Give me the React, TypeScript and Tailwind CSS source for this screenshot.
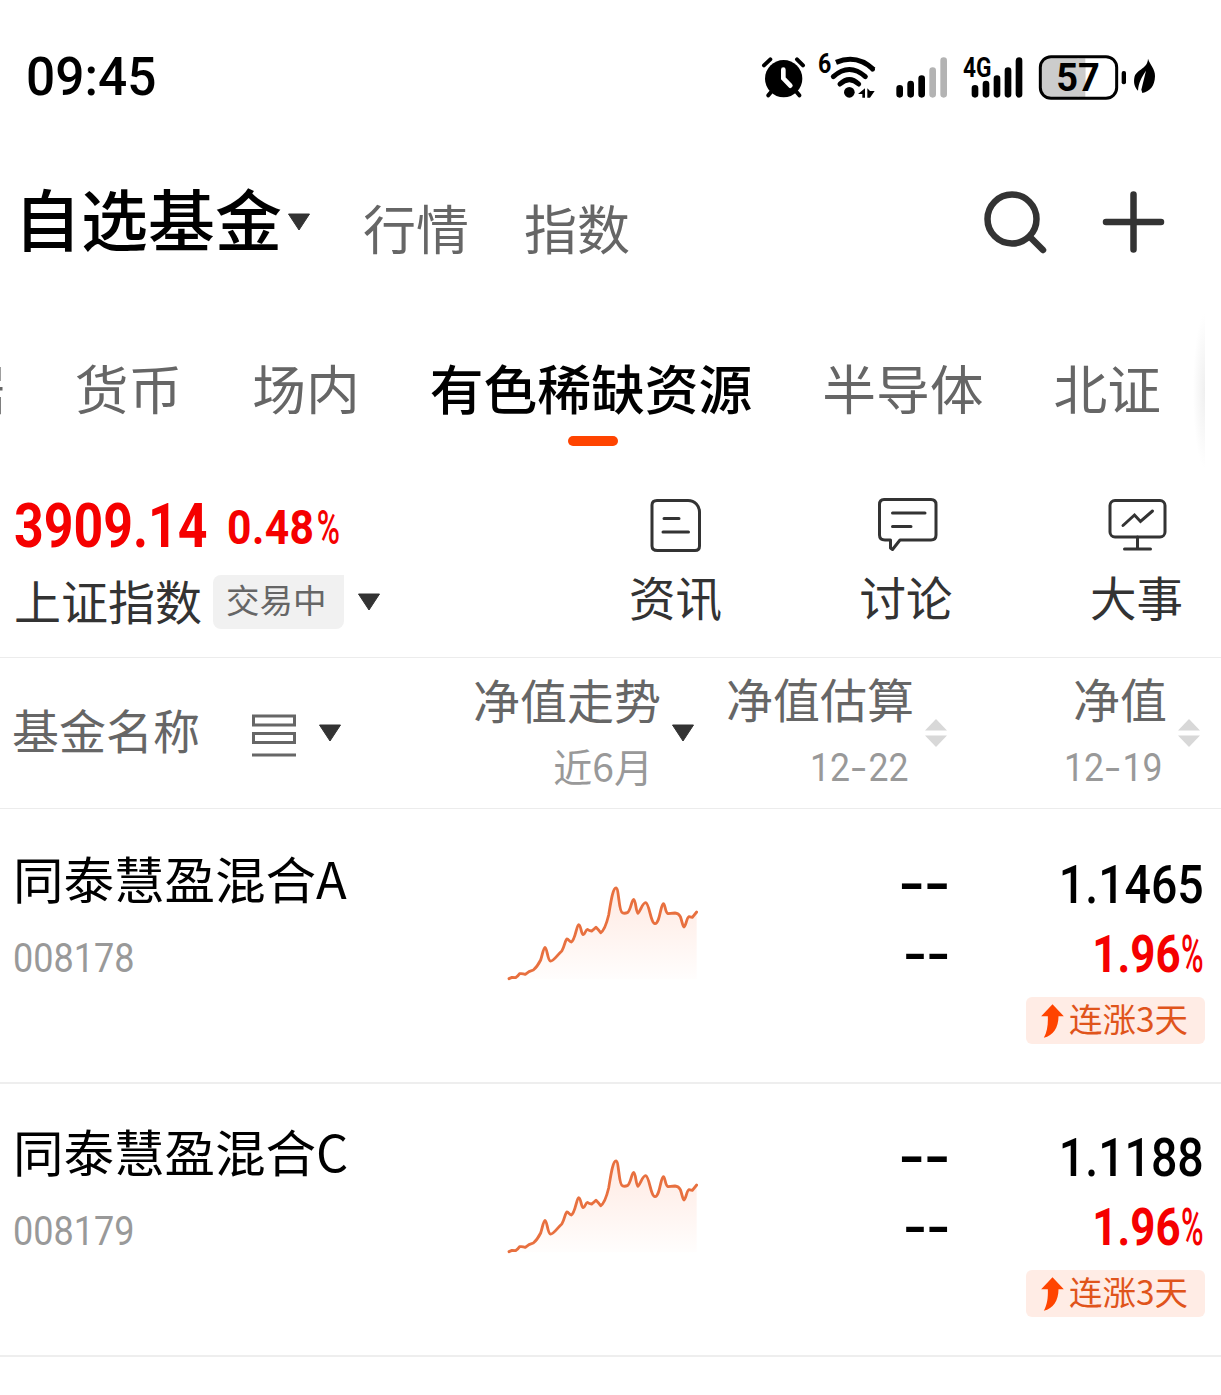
import clsx from 'clsx';

const funds = [
  { name: '同泰慧盈混合A', code: '008178', value: '1.1465', change: '1.96%', streak: '连涨3天' },
  { name: '同泰慧盈混合C', code: '008179', value: '1.1188', change: '1.96%', streak: '连涨3天' },
];

const tabs = ['据', '货币', '场内', '有色稀缺资源', '半导体', '北证'];

const trend =
  'M87 356 L96 352 L107 353 Q114 348 119 341 Q128 340 136 343 L147 335 L160 330 Q172 320 182 300 C188 280 191 262 195 262 C201 262 203 302 211 303 C220 305 230 287 246 272 C254 258 256 237 261 237 C266 237 268 246 274 246 C286 240 290 194 296 194 C303 194 303 223 310 224 C315 224 317 208 322 208 Q328 212 335 213 Q341 209 348 202 Q355 209 362 218 C372 212 380 190 386 165 C392 130 398 84 408 84 C417 84 416 155 427 158 C433 161 437 160 442 158 C452 153 455 118 461 118 C467 118 468 158 474 160 C482 152 488 127 497 128 C508 130 512 190 525 191 C540 190 542 131 550 131 C556 131 555 158 564 161 L585 159 Q596 160 601 170 C606 182 608 201 612 201 C617 201 620 172 627 170 L637 172 L650 156';

function Caret({ className }: { className?: string }) {
  return (
    <svg viewBox="0 0 24 18" className={clsx('shrink-0', className)}>
      <path d="M1.5 1H22.5L12 17Z" fill="#333" stroke="#333" strokeLinejoin="round" />
    </svg>
  );
}

function Sorter() {
  return (
    <svg viewBox="0 0 24 30" className="ml-[10px] h-[30px] w-6 shrink-0" fill="#d8d8d8">
      <path d="M12 1L23 12.5H1Z" />
      <path d="M12 29L23 17.5H1Z" />
    </svg>
  );
}

function StatusBar() {
  return (
    <div className="flex h-[150px] items-start justify-between pt-[53px] pl-[26px] pr-[65px] text-black">
      <span className="origin-left scale-x-[0.97] font-[Roboto] text-[53px] leading-[48px] font-medium">09:45</span>
      <div className="flex h-12 items-start">
        <svg viewBox="30 40 135 144" className="h-12 w-[45px]" fill="none" stroke="#000" strokeLinecap="round">
          <circle cx="98" cy="117" r="56" fill="#000" stroke="none" />
          <path d="M39 77L58 59M138 59L156 77M66 150L52 167M131 150L145 167" strokeWidth="12" />
          <path d="M97 90V116L118 138" stroke="#fff" strokeWidth="14" />
        </svg>
        <div className="relative ml-[12px] h-12 w-[59px]">
          <span className="absolute top-[-1px] left-0 origin-left scale-x-[0.83] font-[Roboto] text-[28px] leading-6 font-bold">6</span>
          <svg viewBox="201 40 177 144" className="h-12 w-[59px]" fill="none" stroke="#000">
            <path d="M255 68Q318 42 368 90" strokeWidth="15" />
            <circle cx="365" cy="89" r="7" fill="#000" stroke="none" />
            <path d="M247 111Q295 68 343 111" strokeWidth="15" strokeLinecap="round" />
            <path d="M267 133Q295 107 323 133" strokeWidth="15" strokeLinecap="round" />
            <circle cx="295" cy="158" r="16" fill="#000" stroke="none" />
            <path d="M342 146V174H334V163H321ZM349 146L357 154H371L357 174H349Z" fill="#000" stroke="none" />
          </svg>
        </div>
        <svg viewBox="438 40 156 144" className="ml-[19px] h-12 w-[52px]" strokeWidth="20" strokeLinecap="round">
          <path d="M449 146V164M482 133V164M515 117V164" stroke="#000" />
          <path d="M548 93V164M581 63V164" stroke="#b3b3b3" />
        </svg>
        <div className="relative ml-[15px] h-12 w-[60px]">
          <span className="absolute top-[3px] left-0 origin-left scale-x-[0.84] font-[Roboto] text-[27px] leading-6 font-bold">4G</span>
          <svg viewBox="641 40 180 144" className="h-12 w-[60px]" stroke="#000" strokeWidth="20" strokeLinecap="round">
            <path d="M677 146V164M710 133V164M743 117V164M776 93V164M809 63V164" />
          </svg>
        </div>
        <div className="relative ml-[15px] h-12 w-[90px]">
          <svg viewBox="863 40 270 144" className="h-12 w-[90px]">
            <rect x="874" y="56" width="131" height="116" rx="26" fill="#ccc" />
            <rect x="985" y="56" width="20" height="116" fill="#ccc" />
            <rect x="870" y="51" width="229" height="125" rx="32" fill="none" stroke="#000" strokeWidth="9" />
            <rect x="1114" y="94" width="13" height="40" rx="6" />
          </svg>
          <span className="absolute top-0 left-0 w-20 text-center font-[Roboto] text-[38px] leading-[50px] font-bold">57</span>
        </div>
        <svg viewBox="1149 40 69 144" className="ml-[5px] h-12 w-[23px]">
          <path d="M1194 57C1200 76 1215 86 1215 110C1214 140 1200 155 1177 160L1174 150L1188 93C1174 115 1166 128 1164 153C1152 142 1150 126 1154 110C1162 88 1193 87 1194 57Z" />
        </svg>
      </div>
    </div>
  );
}

function Header() {
  return (
    <header className="flex h-[150px] items-start pl-[14px] pr-[54px]">
      <h1 className="mt-[29px] text-[67px] leading-[76px] font-medium text-black">自选基金</h1>
      <Caret className="mt-[63px] ml-[5px] h-[18px] w-6" />
      <nav className="mt-[41px] ml-[52px] flex gap-[55px] text-[53px] leading-[72px] text-[#666]">
        <span>行情</span>
        <span>指数</span>
      </nav>
      <div className="mt-[38px] ml-auto flex gap-[50px]">
        <svg viewBox="0 0 68 68" className="size-[68px]" fill="none" stroke="#333" strokeWidth="6.5" strokeLinecap="round">
          <circle cx="31" cy="31" r="24.5" />
          <path d="M49 49L62 62" />
        </svg>
        <svg viewBox="0 0 68 68" className="size-[68px]" stroke="#333" strokeWidth="6.5" strokeLinecap="round">
          <path d="M34.500 6.500V61.500M7 34H62" />
        </svg>
      </div>
    </header>
  );
}

function Tabs() {
  return (
    <div className="flex h-[180px] overflow-hidden">
      <div className="flex w-[1205px] shrink-0 overflow-hidden">
        <nav className="ml-[-49px] flex shrink-0 gap-[70px] pt-[51px] text-[53.75px] leading-[72px] text-[#666]">
          {tabs.map((tab, i) => (
            <div key={tab} className={clsx('flex shrink-0 flex-col items-center', i === 3 && 'font-medium text-black')}>
              <span className="whitespace-nowrap">{tab}</span>
              {i === 3 && <i className="mt-[13px] ml-[3px] h-[10px] w-[50px] rounded-full bg-[#ff4400]" />}
            </div>
          ))}
        </nav>
        <div className="mt-[14px] ml-auto h-[154px] w-3 shrink-0 bg-[radial-gradient(ellipse_100%_50%_at_100%_50%,#efefef,#ffffff)]" />
      </div>
    </div>
  );
}

function IndexBar() {
  return (
    <section className="flex h-[178px] justify-between border-b border-[#ececec] pr-[38px] pl-[14px]">
      <div>
        <div className="mt-[18px] flex h-[60px] font-[Roboto] font-bold text-[#f50000]">
          <span className="w-[213px] origin-left scale-x-[0.85] text-[61px] leading-[56px]">3909.14</span>
          <span className="origin-left scale-x-[0.87] text-[49px] leading-[60px] tracking-[0.5px]">
            0.48<span className="inline-block origin-left scale-x-[0.74] pl-[3px] font-medium">%</span>
          </span>
        </div>
        <div className="mt-[16px] flex h-[56px] items-center">
          <span className="-mt-[4px] text-[47px] leading-[56px] text-[#333]">上证指数</span>
          <span className="ml-[11px] h-[54px] w-[131px] rounded-lg rounded-tr-none bg-[#f1f1f1] pl-[13px] text-[33.5px] leading-[48px] text-[#666]">
            交易中
          </span>
          <Caret className="ml-[13px] h-[18px] w-6" />
        </div>
      </div>
      <div className="flex gap-[137.5px] pt-[14px] text-[46.5px] text-[#333]">
        <div className="flex flex-col items-center">
          <svg viewBox="0 0 62 62" className="size-[62px]" fill="none" stroke="#333" strokeWidth="3" strokeLinecap="round">
            <path d="M12 6.500H43C50 6.500 54.500 12 54.500 18V52Q54.500 56.500 50 56.500H12.500Q7 56.500 7 52V11Q7 6.500 12 6.500ZM19 24.500H34M18 38H43.500" />
          </svg>
          <span className="leading-[80px]">资讯</span>
        </div>
        <div className="flex flex-col items-center">
          <svg viewBox="0 0 64 62" className="ml-[2px] h-[62px] w-16" fill="none" stroke="#333" strokeWidth="3" strokeLinecap="round" strokeLinejoin="round">
            <path d="M9 5.500H56Q61 5.500 61 10.500V41Q61 46 56 46H25L17.500 55.500L15.500 54V46H10Q4.500 46 4.500 41V10.500Q4.500 5.500 9 5.500ZM17.500 19H50M17.500 32.500H36" />
          </svg>
          <span className="leading-[80px]">讨论</span>
        </div>
        <div className="flex flex-col items-center">
          <svg viewBox="0 0 62 62" className="size-[62px]" fill="none" stroke="#333" strokeWidth="3" strokeLinecap="round">
            <rect x="4" y="6.500" width="55" height="36.500" rx="5" />
            <path d="M31.500 43V54.500M18.500 55H44.500M17 31.500L28.500 21L34.500 27.500L46.500 17" />
          </svg>
          <span className="leading-[80px]">大事</span>
        </div>
      </div>
    </section>
  );
}

function DateLabel({ month, day }: { month: string; day: string }) {
  return (
    <div className="mt-[10px] flex w-[98px] justify-between font-[Roboto] text-[39.5px] leading-[60px]">
      <span className="w-[42px] origin-left scale-x-[0.9]">{month}</span>
      <span className="w-[10px] scale-x-[1.35]">-</span>
      <span className="w-[44px] origin-right scale-x-[0.9] text-right">{day}</span>
    </div>
  );
}

function TableHead() {
  return (
    <div className="grid h-[151px] grid-cols-[460px_235px_253px_253px] border-b border-[#ececec] text-[47px] leading-[60px] text-[#666]">
      <div className="flex items-center pl-[12px]">
        <span className="-mt-[9px]">基金名称</span>
        <svg viewBox="0 0 46 44" className="mt-[4px] ml-[51px] h-11 w-[46px]" fill="none" stroke="#666" strokeWidth="3">
          <path d="M2.500 3H43.500V12H2.500ZM2.500 20.500H43.500V29.500H2.500ZM1 42H45" />
        </svg>
        <Caret className="ml-[21px] h-[18px] w-6" />
      </div>
      <div className="flex items-center justify-end">
        <div className="flex flex-col">
          <div>净值走势</div>
          <div className="mt-[9px] self-end pr-[8px] text-[39px] leading-[54px] text-[#999]">
            <div className="mb-[6px]">近6月</div>
          </div>
        </div>
        <Caret className="ml-[10px] h-[18px] w-6" />
      </div>
      <div className="flex items-center justify-end">
        <div className="flex flex-col text-[#999]">
          <div className="text-[#666]">净值估算</div>
          <div className="flex justify-end pr-[6px]">
            <DateLabel month="12" day="22" />
          </div>
        </div>
        <Sorter />
      </div>
      <div className="flex items-center justify-end">
        <div className="flex flex-col text-[#999]">
          <div className="text-right text-[#666]">净值</div>
          <div className="flex justify-end pr-[5px]">
            <DateLabel month="12" day="19" />
          </div>
        </div>
        <Sorter />
      </div>
    </div>
  );
}

function Sparkline({ id }: { id: string }) {
  return (
    <svg viewBox="81 72 573 291" className="mt-[73px] ml-[47px] h-[97px] w-[191px]">
      <defs>
        <linearGradient id={id} x1="0" y1="0" x2="0" y2="1">
          <stop offset="0" stopColor="#ff5a1f" stopOpacity="0.13" />
          <stop offset="1" stopColor="#ff5a1f" stopOpacity="0.01" />
        </linearGradient>
      </defs>
      <path d={trend + ' V358 H87Z'} fill={`url(#${id})`} />
      <path d={trend} fill="none" stroke="#e8703f" strokeWidth="8.500" strokeLinecap="round" strokeLinejoin="round" />
    </svg>
  );
}

function Dashes({ className }: { className?: string }) {
  return <div className={clsx('origin-right font-[Roboto] font-medium', className)}>--</div>;
}

export default function App() {
  return (
    <div className="h-[1395px] w-[1221px] overflow-hidden bg-white font-['Noto_Sans_CJK_SC',sans-serif]">
      <StatusBar />
      <Header />
      <Tabs />
      <IndexBar />
      <TableHead />
      <div className="pt-[2px]">
        {funds.map((fund) => (
          <div key={fund.code} className="grid h-[273px] grid-cols-[460px_238px_252px_255px] border-b-2 border-[#eee]">
            <div className="pl-[13px]">
              <div className="pt-[31px] text-[50.5px] leading-[70px] text-black">{fund.name}</div>
              <div className="mt-[21px] origin-left scale-x-[0.9] font-[Roboto] text-[40px] leading-[52px] text-[#999]">{fund.code}</div>
            </div>
            <Sparkline id={`fill-${fund.code}`} />
            <div className="pt-[38px] text-right text-black">
              <Dashes className="scale-x-[1.25] text-[60px] leading-[70px]" />
              <Dashes className="scale-x-[1.22] text-[56px] leading-[70px]" />
            </div>
            <div className="flex flex-col items-end pt-[39px]">
              <div className="origin-right scale-x-[0.86] pr-[2px] font-[Roboto] text-[54px] leading-[70px] font-medium text-black">{fund.value}</div>
              <div className="origin-right scale-x-[0.86] pr-[4px] font-[Roboto] text-[51px] leading-[70px] font-bold text-[#f50000]">
                {fund.change.slice(0, -1)}
                <span className="-mr-[13px] inline-block origin-left scale-x-[0.7] font-medium">%</span>
              </div>
              <div className="mt-[7px] flex h-[47px] w-[179px] items-center rounded-md bg-[#ffece5] pl-[15px] text-[#e0541b]">
                <svg viewBox="514 490 68 102" className="h-[34px] w-[23px]" fill="#ff4400">
                  <path d="M548 491L582 527H566C566 560 550 586 522 591C532 574 535 552 534 527H514Z" />
                </svg>
                <span className="-mt-[6px] ml-[5px] text-[33.500px] leading-[42px]">{fund.streak}</span>
              </div>
            </div>
          </div>
        ))}
      </div>
    </div>
  );
}
